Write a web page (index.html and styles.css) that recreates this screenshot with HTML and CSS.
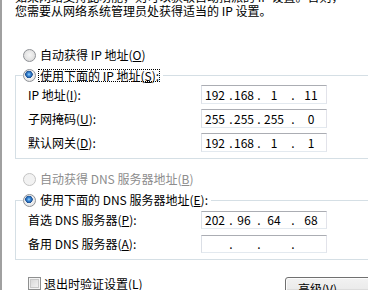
FILE: index.html
```html
<!DOCTYPE html>
<html lang="zh-CN">
<head>
    <meta charset="UTF-8">
    <meta name="viewport" content="width=device-width, initial-scale=1.0">
    <title>Internet 协议版本 4 (TCP/IPv4) 属性</title>
    <link rel="stylesheet" href="styles.css">
</head>
<body>
    <div class="dialog">
        <p class="intro">如果网络支持此功能，则可以获取自动指派的 IP 设置。否则，<br>您需要从网络系统管理员处获得适当的 IP 设置。</p>

        <div class="option first">
            <span class="radio"></span>
            <span class="caption">自动获得 IP 地址(<u>O</u>)</span>
        </div>

        <fieldset class="group">
            <legend class="option">
                <span class="radio on"></span>
                <span class="caption focus">使用下面的 IP 地址(<u>S</u>):</span>
            </legend>
            <div class="rows ip-rows">
                <span class="label">IP 地址(<u>I</u>):</span>
                <div class="ipbox">
                    <span class="f1">192</span><span class="d1">.</span><span class="f2">168</span><span class="d2">.</span><span class="f3">1</span><span class="d3">.</span><span class="f4">11</span>
                </div>
                <span class="label">子网掩码(<u>U</u>):</span>
                <div class="ipbox">
                    <span class="f1">255</span><span class="d1">.</span><span class="f2">255</span><span class="d2">.</span><span class="f3">255</span><span class="d3">.</span><span class="f4">0</span>
                </div>
                <span class="label">默认网关(<u>D</u>):</span>
                <div class="ipbox">
                    <span class="f1">192</span><span class="d1">.</span><span class="f2">168</span><span class="d2">.</span><span class="f3">1</span><span class="d3">.</span><span class="f4">1</span>
                </div>
            </div>
        </fieldset>

        <div class="option dns-auto disabled">
            <span class="radio"></span>
            <span class="caption">自动获得 DNS 服务器地址(<u>B</u>)</span>
        </div>

        <fieldset class="group dns">
            <legend class="option">
                <span class="radio on"></span>
                <span class="caption">使用下面的 DNS 服务器地址(<u>E</u>):</span>
            </legend>
            <div class="rows dns-rows">
                <span class="label">首选 DNS 服务器(<u>P</u>):</span>
                <div class="ipbox">
                    <span class="f1">202</span><span class="d1">.</span><span class="f2">96</span><span class="d2">.</span><span class="f3">64</span><span class="d3">.</span><span class="f4">68</span>
                </div>
                <span class="label">备用 DNS 服务器(<u>A</u>):</span>
                <div class="ipbox">
                    <span class="f1"></span><span class="d1">.</span><span class="f2"></span><span class="d2">.</span><span class="f3"></span><span class="d3">.</span><span class="f4"></span>
                </div>
            </div>
        </fieldset>

        <div class="footer">
            <div class="check-row">
                <span class="checkbox"></span>
                <span class="caption">退出时验证设置(<u>L</u>)</span>
            </div>
            <button class="btn">高级(<u>V</u>)...</button>
        </div>
    </div>
</body>
</html>
```

FILE: styles.css
```css
html, body {
    margin: 0;
    padding: 0;
    overflow: hidden;
    background-color: #fff;
}

body {
    font-family: "Noto Sans CJK SC", "Liberation Sans", sans-serif;
    font-size: 12px;
    line-height: 14px;
    color: #000;
}

.dialog {
    width: 381px;
    height: 290px;
    border-left: 2px solid #a0a0a0;
    overflow: hidden;
}

.intro {
    margin: -10px 0 0 13px;
    line-height: 14px;
    white-space: nowrap;
}

u {
    text-decoration: underline;
    text-underline-offset: 1px;
}

/* radio rows */
.option {
    display: flex;
    align-items: center;
    height: 14px;
}

.option.first {
    margin: 30px 0 0 21px;
}

.option.dns-auto {
    margin: 13px 0 0 21px;
}

.disabled {
    color: #8d8d8d;
}

.radio {
    width: 13px;
    height: 13px;
    box-sizing: border-box;
    border-radius: 50%;
    border: 1px solid #8e9196;
    background: radial-gradient(circle at 50% 45%, #f6f6f6 0, #e2e2e2 60%, #cfcfcf 100%);
    flex-shrink: 0;
}

.radio.on {
    background: radial-gradient(circle at 45% 40%, #9fd6ff 0, #3f8fdc 1.5px, #1b4f93 3.5px, #f0f0f0 4px, #dcdcdc 100%);
}

.disabled .radio {
    border-color: #c3c3c3;
    background: #f2f2f2;
}

.caption {
    margin-left: 4px;
    white-space: nowrap;
}

.caption.focus {
    margin-left: 2px;
    padding: 0 1px 0 2px;
    outline: 1px dotted #000;
    outline-offset: -1px;
    line-height: 13px;
}

/* group boxes */
.group {
    margin: 6px 0 0 13px;
    padding: 0 0 6px 7px;
    border: 1px solid #d5dfe5;
    border-right: none;
    min-width: 0;
}

.group.dns {
    margin-top: 7px;
}

.group legend {
    padding: 0 3px 0 0;
}

.rows {
    display: grid;
    grid-template-columns: 178px 126px;
    align-items: center;
}

.ip-rows {
    margin-top: 3px;
    grid-auto-rows: 19px;
    row-gap: 5px;
}

.dns-rows {
    margin-top: 4px;
    grid-auto-rows: 18px;
    row-gap: 6px;
}

.label {
    padding-left: 5px;
    white-space: nowrap;
}

.ipbox {
    height: 100%;
    box-sizing: border-box;
    display: flex;
    align-items: center;
    border: 1px solid;
    border-color: #abadb3 #e2e3ea #e3e9ef #dbdfe6;
    background-color: #fff;
    font-size: 12px;
}

.ipbox span {
    text-align: center;
}

.ipbox .f1 { width: 26px; }
.ipbox .d1 { width: 6px; }
.ipbox .f2 { width: 20px; }
.ipbox .d2 { width: 10px; }
.ipbox .f3 { width: 20px; }
.ipbox .d3 { width: 18px; }
.ipbox .f4 { width: 18px; }

/* bottom row */
.footer {
    display: flex;
    align-items: flex-start;
    justify-content: space-between;
    margin-top: 17px;
    padding-left: 26px;
    padding-right: 8px;
}

.check-row {
    display: flex;
    align-items: center;
    height: 13px;
}

.checkbox {
    width: 13px;
    height: 13px;
    box-sizing: border-box;
    border: 1px solid #8e8f8f;
    background: linear-gradient(135deg, #d2d2d2, #f8f8f8);
    box-shadow: inset 0 0 0 1px #f4f4f4, inset 0 0 0 2px #c8c8c8;
}

.check-row .caption {
    margin-left: 3px;
    line-height: 13px;
}

.btn {
    width: 90px;
    height: 23px;
    padding: 0 0 0 12px;
    text-align: left;
    font-family: inherit;
    font-size: 12px;
    color: #000;
    border: 1px solid #707070;
    border-radius: 3px;
    background: linear-gradient(#f2f2f2 0%, #ebebeb 50%, #dddddd 51%, #cfcfcf 100%);
    box-shadow: inset 0 0 0 1px #fcfcfc;
}
```
